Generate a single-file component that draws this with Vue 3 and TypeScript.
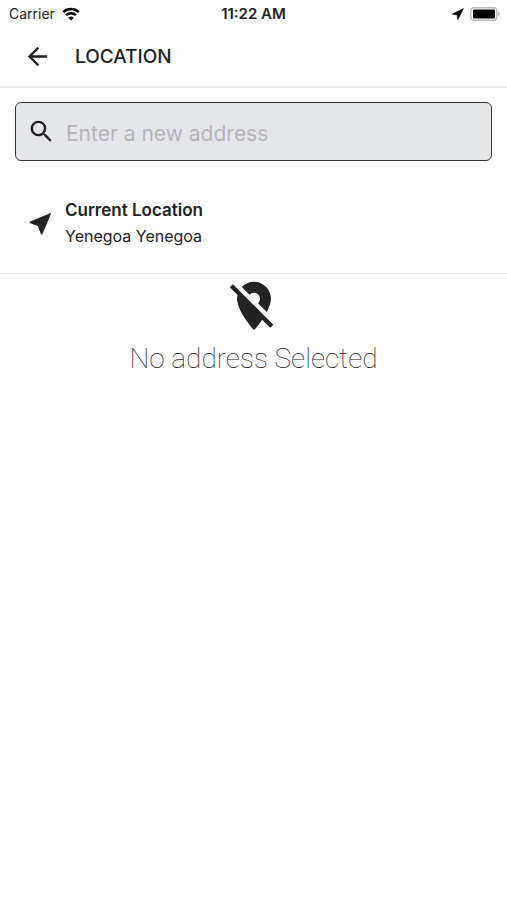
<script setup lang="ts">
import { ref } from 'vue'

const address = ref('')
const currentLocation = ref('Yenegoa Yenegoa')
</script>

<template>
  <div class="screen">
    <div class="status">
      <div class="carrier">
        <span>Carrier</span>
        <svg class="wifi" viewBox="0 0 18 14" aria-hidden="true">
          <path d="M1.2 5.2a11.3 11.3 0 0 1 15.6 0" />
          <path d="M4 8.2a7.2 7.2 0 0 1 10 0" />
          <path class="dot" d="M9 13.6 6.2 10.8a4 4 0 0 1 5.6 0z" />
        </svg>
      </div>
      <span class="time">11:22 AM</span>
      <div class="indicators">
        <svg class="gps" viewBox="0 0 12 12" aria-hidden="true">
          <path d="M11.6.6.4 6.1l4.8.8.6 4.7z" />
        </svg>
        <svg class="battery" viewBox="0 0 30 14" aria-hidden="true">
          <rect class="shell" x="0.8" y="0.8" width="26" height="12.4" rx="3" />
          <rect x="3" y="2.6" width="22" height="8.8" rx="1" />
          <path class="cap" d="M28 4.6c2.2.8 2.2 4 0 4.8z" />
        </svg>
      </div>
    </div>

    <header class="bar">
      <button class="back" type="button" aria-label="Back">
        <svg class="icon" viewBox="0 0 24 24" aria-hidden="true">
          <path d="M20 11H7.83l5.59-5.59L12 4l-8 8 8 8 1.41-1.41L7.83 13H20v-2z" />
        </svg>
      </button>
      <h1>LOCATION</h1>
    </header>

    <main>
      <label class="search">
        <svg class="icon" viewBox="0 0 24 24" aria-hidden="true">
          <path d="M15.5 14h-.79l-.28-.27A6.47 6.47 0 0 0 16 9.5 6.5 6.5 0 1 0 9.5 16c1.61 0 3.09-.59 4.23-1.57l.27.28v.79l5 4.99L20.49 19l-4.99-5zm-6 0C7.01 14 5 11.99 5 9.5S7.01 5 9.5 5 14 7.01 14 9.5 11.99 14 9.5 14z" />
        </svg>
        <input v-model="address" type="text" placeholder="Enter a new address" aria-label="Enter a new address" />
      </label>

      <button class="current" type="button">
        <svg class="icon" viewBox="0 0 24 24" aria-hidden="true">
          <path d="M21 3 3 10.53v.98l6.84 2.65L12.48 21h.98L21 3z" />
        </svg>
        <span class="lines">
          <strong>Current Location</strong>
          <span class="place">{{ currentLocation }}</span>
        </span>
      </button>

      <section class="empty">
        <svg viewBox="0 0 24 24" aria-hidden="true">
          <path d="M12 6.5c1.38 0 2.5 1.12 2.5 2.5 0 .74-.33 1.39-.83 1.85l3.63 3.63c.98-1.86 1.7-3.8 1.7-5.48 0-3.87-3.13-7-7-7-1.98 0-3.76.83-5.04 2.15l3.19 3.19c.46-.52 1.11-.84 1.85-.84zm4.37 9.6-4.63-4.63-.11-.11L3.27 3 2 4.27l3.18 3.18C5.07 7.95 5 8.47 5 9c0 5.25 7 13 7 13s1.67-1.85 3.38-4.35L18.73 21 20 19.73l-3.63-3.63z" />
        </svg>
        <p>No address Selected</p>
      </section>
    </main>
  </div>
</template>

<style>
body {
  background: #fff;
}
</style>

<style scoped>
.screen {
  min-height: 100vh;
  background: #fff;
  color: #222;
  font-family: Inter, "Liberation Sans", sans-serif;
}

button {
  padding: 0;
  border: 0;
  background: none;
  color: inherit;
  font: inherit;
}

.icon {
  display: block;
  flex: none;
  width: 29px;
  height: 29px;
  fill: currentColor;
}

.status {
  display: grid;
  grid-template-columns: 1fr auto 1fr;
  align-items: center;
  height: 27px;
  padding: 0 7px;
  font-size: 14px;
  line-height: 20px;
}

.carrier {
  display: flex;
  align-items: center;
  gap: 7px;
  padding-left: 2px;
}

.wifi {
  width: 18px;
  height: 14px;
  fill: none;
  stroke: #000;
  stroke-width: 2.5;
}

.wifi .dot {
  fill: #000;
  stroke: none;
}

.time {
  font-size: 15px;
  font-weight: 600;
}

.indicators {
  display: flex;
  align-items: center;
  justify-content: flex-end;
  gap: 6px;
}

.gps {
  width: 12px;
  height: 12px;
  stroke: #000;
  stroke-width: 0.6;
}

.battery {
  width: 30px;
  height: 14px;
}

.shell {
  fill: #fff;
  stroke: #bbb;
  stroke-width: 1.4;
}

.cap {
  fill: #bbb;
}

.bar {
  display: flex;
  align-items: center;
  gap: 23px;
  height: 59px;
  padding: 0 23px;
  border-bottom: 2px solid #e4e4e4;
}

h1 {
  margin: 0;
  font-size: 19px;
  line-height: 24px;
  font-weight: 500;
}

.search {
  display: flex;
  align-items: center;
  gap: 10px;
  box-sizing: border-box;
  height: 59px;
  margin: 14px 15px 0;
  padding: 0 11px;
  border: 1px solid #333;
  border-radius: 6px;
  background: #e5e6ea;
}

.search input {
  flex: 1;
  min-width: 0;
  height: 40px;
  padding: 3px 0 0;
  border: 0;
  outline: 0;
  background: transparent;
  color: #222;
  font: 400 21px/28px Inter, "Liberation Sans", sans-serif;
}

.search input::placeholder {
  color: #b3b4b8;
  opacity: 1;
}

.current {
  display: flex;
  align-items: center;
  gap: 10px;
  box-sizing: border-box;
  width: 100%;
  height: 113px;
  padding: 12px 26px 0;
  border-bottom: 1px solid #ebebeb;
  text-align: left;
}

.lines {
  display: flex;
  flex-direction: column;
  font-size: 17px;
  line-height: 26px;
}

.lines strong {
  font-weight: 600;
}

.place {
  font-size: 16px;
}

.empty {
  display: flex;
  flex-direction: column;
  align-items: center;
  padding-top: 3px;
}

.empty svg {
  width: 58px;
  height: 58px;
  fill: currentColor;
}

.empty p {
  margin: 6px 0 0;
  font-family: Roboto, Inter, sans-serif;
  font-size: 28px;
  line-height: 36px;
  font-weight: 100;
}
</style>
